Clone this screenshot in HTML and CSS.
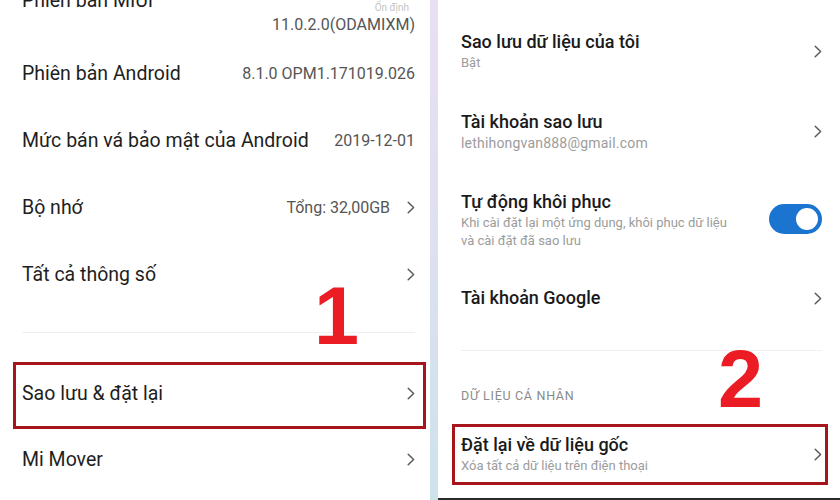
FILE: index.html
```html
<!DOCTYPE html>
<html lang="vi">
<head>
<meta charset="utf-8">
<title>Sao lưu &amp; đặt lại</title>
<link rel="stylesheet" href="styles.css">
</head>
<body>
<div class="screen">
  <section class="panel panel-left">
    <div class="list list-top">
      <div class="row row-cut">
        <span class="title">Phiên bản MIUI</span>
        <div class="val-stack">
          <span class="val-small">Ổn định</span>
          <span class="val">11.0.2.0(ODAMIXM)</span>
        </div>
      </div>
      <div class="row">
        <span class="title">Phiên bản Android</span>
        <span class="val">8.1.0 OPM1.171019.026</span>
      </div>
      <div class="row">
        <span class="title">Mức bán vá bảo mật của Android</span>
        <span class="val">2019-12-01</span>
      </div>
      <div class="row">
        <span class="title">Bộ nhớ</span>
        <span class="val">Tổng: 32,00GB</span>
        <svg class="chev" viewBox="0 0 8 13" width="8" height="13"><path d="M1.2 1.2 L6.6 6.5 L1.2 11.8"/></svg>
      </div>
      <div class="row">
        <span class="title">Tất cả thông số</span>
        <svg class="chev" viewBox="0 0 8 13" width="8" height="13"><path d="M1.2 1.2 L6.6 6.5 L1.2 11.8"/></svg>
      </div>
    </div>
    <div class="sep sep-left"></div>
    <div class="list list-bottom">
      <div class="row">
        <span class="title">Sao lưu &amp; đặt lại</span>
        <svg class="chev" viewBox="0 0 8 13" width="8" height="13"><path d="M1.2 1.2 L6.6 6.5 L1.2 11.8"/></svg>
      </div>
      <div class="row">
        <span class="title">Mi Mover</span>
        <svg class="chev" viewBox="0 0 8 13" width="8" height="13"><path d="M1.2 1.2 L6.6 6.5 L1.2 11.8"/></svg>
      </div>
    </div>
  </section>

  <div class="divider"></div>

  <section class="panel panel-right">
    <div class="item">
      <div class="item-text">
        <div class="item-title">Sao lưu dữ liệu của tôi</div>
        <div class="item-sub">Bật</div>
      </div>
      <svg class="chev chev-right" viewBox="0 0 8 13" width="8" height="13"><path d="M1.2 1.2 L6.6 6.5 L1.2 11.8"/></svg>
    </div>
    <div class="item">
      <div class="item-text">
        <div class="item-title">Tài khoản sao lưu</div>
        <div class="item-sub item-email">lethihongvan888@gmail.com</div>
      </div>
      <svg class="chev chev-right" viewBox="0 0 8 13" width="8" height="13"><path d="M1.2 1.2 L6.6 6.5 L1.2 11.8"/></svg>
    </div>
    <div class="item item-toggle">
      <div class="item-text">
        <div class="item-title">Tự động khôi phục</div>
        <div class="item-sub">Khi cài đặt lại một ứng dụng, khôi phục dữ liệu<br>và cài đặt đã sao lưu</div>
      </div>
      <div class="toggle"><span class="knob"></span></div>
    </div>
    <div class="item item-single">
      <div class="item-text">
        <div class="item-title">Tài khoản Google</div>
      </div>
      <svg class="chev chev-right" viewBox="0 0 8 13" width="8" height="13"><path d="M1.2 1.2 L6.6 6.5 L1.2 11.8"/></svg>
    </div>
    <div class="sep sep-right"></div>
    <div class="section-head">DỮ LIỆU CÁ NHÂN</div>
    <div class="item">
      <div class="item-text">
        <div class="item-title">Đặt lại về dữ liệu gốc</div>
        <div class="item-sub">Xóa tất cả dữ liệu trên điện thoại</div>
      </div>
      <svg class="chev chev-right" viewBox="0 0 8 13" width="8" height="13"><path d="M1.2 1.2 L6.6 6.5 L1.2 11.8"/></svg>
    </div>
  </section>

  <div class="mark-box mark-box-1"></div>
  <div class="mark-box mark-box-2"></div>
  <div class="mark-num mark-num-1">1</div>
  <div class="mark-num mark-num-2">2</div>
</div>
</body>
</html>
```

FILE: styles.css
```css
html, body {
  margin: 0;
  padding: 0;
  background: #ffffff;
}

body {
  font-family: Roboto, "Noto Sans", "Liberation Sans", sans-serif;
  color: #1c1c1c;
}

.screen {
  position: relative;
  display: flex;
  width: 840px;
  height: 500px;
  overflow: hidden;
  background: #ffffff;
}

/* ---------- left panel ---------- */
.panel-left {
  flex: none;
  width: 430px;
  height: 500px;
  overflow: hidden;
}

.row {
  display: flex;
  align-items: center;
  height: 67px;
  padding: 0 15px 0 22px;
}

.row-cut {
  margin-top: -31px;
  height: 71px;
}

.row-cut .title {
  padding-bottom: 9px;
}

.list-bottom .row {
  height: 66px;
}

.title {
  flex: 1;
  font-size: 19.5px;
  color: #1e1e1e;
  white-space: nowrap;
}

.val {
  font-size: 16px;
  line-height: 20px;
  color: #555555;
  white-space: nowrap;
}

.val-stack {
  display: flex;
  flex-direction: column;
  align-items: flex-end;
  padding-top: 26px;
}

.val-small {
  font-size: 10px;
  line-height: 14px;
  color: #c4c4c4;
  margin-right: 6px;
}

.chev {
  flex: none;
  margin-left: 17px;
  fill: none;
  stroke: #5a5a5a;
  stroke-width: 1.5;
  stroke-linecap: round;
  stroke-linejoin: round;
}

.sep {
  height: 1px;
  background: #efefef;
}

.sep-left {
  margin: 24px 15px 27px 22px;
}

/* ---------- divider ---------- */
.divider {
  flex: none;
  width: 8px;
  height: 500px;
  background: linear-gradient(to bottom, #e9dff0 0%, #dfe0ee 45%, #cde3ea 100%);
}

/* ---------- right panel ---------- */
.panel-right {
  flex: 1;
  height: 500px;
  box-sizing: border-box;
  padding: 12px 18px 0 23px;
  border-bottom: 2px solid #2b2b2b;
}

.item {
  display: flex;
  align-items: center;
  padding: 19px 0 20px;
}

.item-toggle {
  padding-bottom: 18px;
}

.item-text {
  flex: 1;
}

.item-title {
  font-size: 18px;
  line-height: 22px;
  font-weight: 500;
  color: #1a1a1a;
  white-space: nowrap;
}

.item-sub {
  margin-top: 1px;
  font-size: 13px;
  line-height: 18px;
  color: #9c9c9c;
  white-space: nowrap;
}

.item-email {
  font-size: 14px;
  letter-spacing: 0.2px;
}

.chev-right {
  margin-left: 16px;
}

.toggle {
  flex: none;
  display: flex;
  justify-content: flex-end;
  align-items: center;
  box-sizing: border-box;
  width: 53px;
  height: 30px;
  padding: 0 4px;
  margin-bottom: 4px;
  border-radius: 15px;
  background: #1a74d0;
}

.knob {
  display: block;
  width: 22px;
  height: 22px;
  border-radius: 50%;
  background: #ffffff;
}

.sep-right {
  margin-top: 21px;
}

.section-head {
  margin: 37px 0 11px;
  font-size: 12.5px;
  line-height: 16px;
  color: #8a8a8a;
  letter-spacing: 0.7px;
}

/* ---------- annotations ---------- */
.mark-box {
  position: absolute;
  box-sizing: border-box;
  border: 3px solid #a8141b;
}

.mark-box-1 {
  left: 13px;
  top: 362px;
  width: 413px;
  height: 67px;
}

.mark-box-2 {
  left: 452px;
  top: 424px;
  width: 376px;
  height: 61px;
}

.mark-num {
  position: absolute;
  font-family: "Liberation Sans", Arial, sans-serif;
  font-weight: 700;
  font-size: 81px;
  line-height: 81px;
  color: #ec1c24;
}

.mark-num-1 {
  left: 314px;
  top: 276px;
}

.mark-num-2 {
  left: 718px;
  top: 339px;
}
```
